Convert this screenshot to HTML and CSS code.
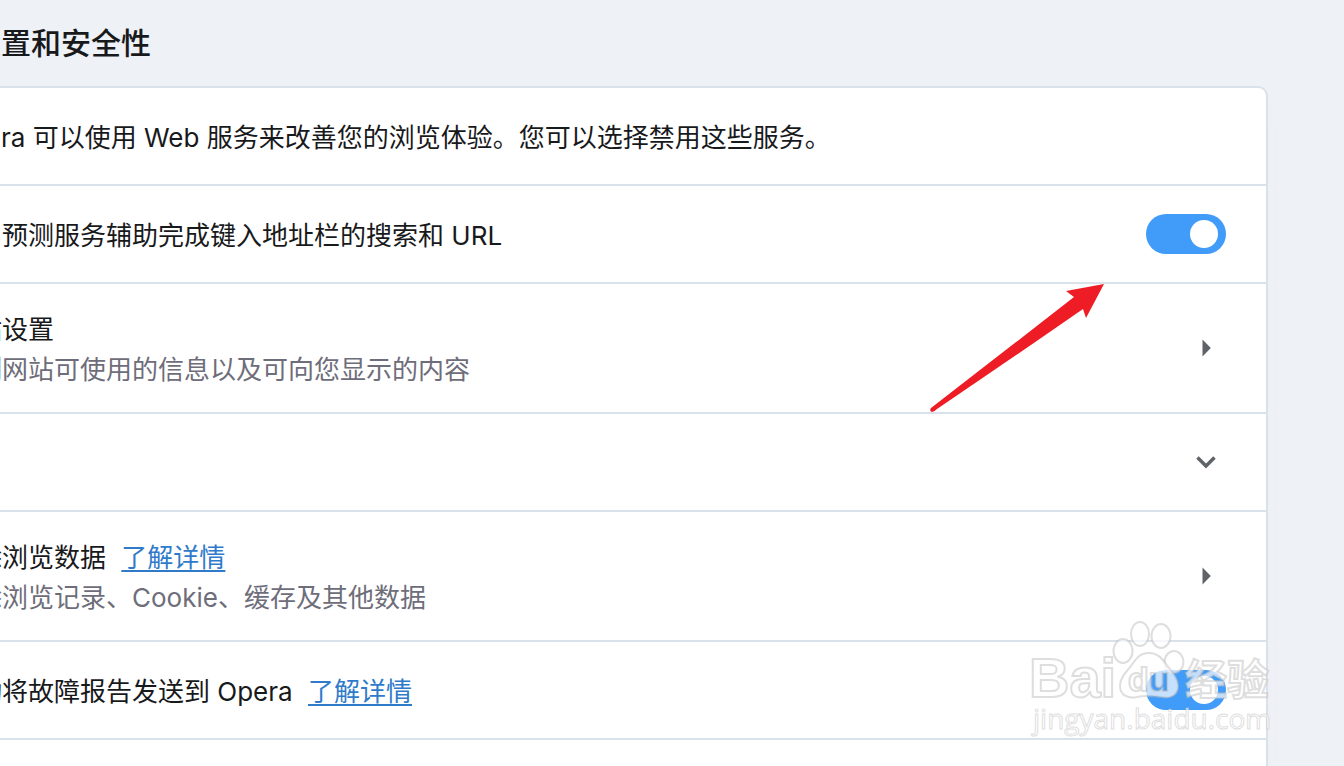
FILE: index.html
```
<!DOCTYPE html>
<html lang="zh-CN">
<head>
    <meta charset="UTF-8">
    <meta name="viewport" content="width=device-width, initial-scale=1.0">
    <title>隐私设置和安全性</title>
    <link rel="stylesheet" href="styles.css">
</head>
<body>
    <main class="section">
        <h1>隐私设置和安全性</h1>
        <div class="card">
            <div class="row">
                <p class="text">Opera 可以使用 Web 服务来改善您的浏览体验。您可以选择禁用这些服务。</p>
            </div>
            <div class="row">
                <label class="text" for="predict">使用预测服务辅助完成键入地址栏的搜索和 URL</label>
                <input class="toggle" type="checkbox" id="predict" checked>
            </div>
            <div class="row">
                <div class="text">
                    <p>网站设置</p>
                    <p class="sub">控制网站可使用的信息以及可向您显示的内容</p>
                </div>
                <button class="icon-button" aria-label="网站设置">
                    <svg width="40" height="40" viewBox="0 0 40 40"><path d="M16.500 11.500L24.800 20L16.500 28.500Z" fill="#5f6368"/></svg>
                </button>
                <svg class="arrow" width="180" height="132" viewBox="0 0 180 132">
                    <path d="M178 0L140 7L148 13Q80 66 5 124Q3 127 6 128Q8 128 11 125Q85 75 157 25L160 34Z" fill="#ee1c25"/>
                </svg>
            </div>
            <div class="row">
                <button class="icon-button" aria-label="更多">
                    <svg width="40" height="40" viewBox="0 0 40 40"><path d="M11.500 15.500L20 24L28.500 15.500" fill="none" stroke="#5f6368" stroke-width="3.500"/></svg>
                </button>
            </div>
            <div class="row">
                <div class="text">
                    <p>清除浏览数据 <a href="#">了解详情</a></p>
                    <p class="sub">清除浏览记录、Cookie、缓存及其他数据</p>
                </div>
                <button class="icon-button" aria-label="清除浏览数据">
                    <svg width="40" height="40" viewBox="0 0 40 40"><path d="M16.500 11.500L24.800 20L16.500 28.500Z" fill="#5f6368"/></svg>
                </button>
            </div>
            <div class="row">
                <p class="text"><label for="report">自动将故障报告发送到 Opera</label> <a href="#">了解详情</a></p>
                <input class="toggle" type="checkbox" id="report" checked>
                <svg class="watermark" width="250" height="130" viewBox="0 0 250 130">
                    <defs>
                        <mask id="cut">
                            <rect width="250" height="130" fill="#fff"/>
                            <text class="du" x="102" y="75" fill="#000">du</text>
                        </mask>
                    </defs>
                    <g class="mark">
                        <text class="bai" x="3" y="81">Bai</text>
                        <ellipse cx="97" cy="35" rx="9.500" ry="12"/>
                        <ellipse cx="114" cy="18" rx="9" ry="12"/>
                        <ellipse cx="135" cy="20" rx="9.500" ry="12"/>
                        <ellipse cx="148" cy="46" rx="9.500" ry="11"/>
                        <path mask="url(#cut)" d="M123 37C112 37 109 45 105 50C100 56 94 62 94 70C94 79 102 83 111 81C119 79 128 80 136 81C146 83 152 78 152 70C152 63 147 57 143 52C138 46 134 37 123 37Z"/>
                        <text class="jingyan" x="159" y="79">经验</text>
                        <text class="site" x="7" y="113">jingyan.baidu.com</text>
                    </g>
                    <text class="du du-line" x="102" y="75">du</text>
                </svg>
            </div>
            <div class="row"></div>
        </div>
    </main>
</body>
</html>
```
FILE: styles.css
```
* {
    box-sizing: border-box;
}
html {
    overflow: hidden;
}
body {
    margin: 0;
    height: 100vh;
    overflow: hidden;
    background-color: #eef1f6;
    color: #18191b;
    font-family: Inter, "Noto Sans CJK SC", sans-serif;
    font-size: 26px;
    line-height: 40px;
}
/* the panel is scrolled to its right side */
.section {
    margin: 0 76px 0 -92px;
}
h1 {
    margin: 0;
    padding: 23px 0 23px 3px;
    font-size: 30px;
    font-weight: 500;
    line-height: 40px;
}
p {
    margin: 0;
}
.card {
    background-color: #fff;
    border: 2px solid #d9e2ea;
    border-radius: 10px;
    box-shadow: 0 24px 18px #edf0f5;
}
.row {
    position: relative;
    display: flex;
    align-items: center;
    min-height: 98px;
    padding: 22px 40px;
    border-bottom: 2px solid #d9e2ea;
}
.row:last-child {
    border-bottom: none;
}
.text {
    padding-top: 4px;
}
.sub {
    color: #6e6d7a;
}
a {
    margin-left: 8px;
    color: #2f7bca;
    text-decoration-thickness: 2px;
    text-underline-offset: 3px;
}
.toggle {
    appearance: none;
    display: flex;
    align-items: center;
    justify-content: flex-end;
    width: 80px;
    height: 40px;
    margin: 0 0 0 auto;
    padding-right: 8px;
    border-radius: 20px;
    background-color: #419bf9;
    cursor: pointer;
}
.toggle::before {
    content: "";
    width: 28px;
    height: 28px;
    border-radius: 50%;
    background-color: #fff;
}
.toggle:not(:checked) {
    justify-content: flex-start;
    padding-left: 8px;
    background-color: #b5bcc4;
}
.icon-button {
    width: 40px;
    height: 40px;
    margin-left: auto;
    padding: 0;
    border: none;
    background: none;
    cursor: pointer;
}
.icon-button svg {
    display: block;
}
.arrow {
    position: absolute;
    top: 0;
    right: 160px;
}
.watermark {
    position: absolute;
    top: -26px;
    right: -10px;
    pointer-events: none;
}
.mark {
    fill: rgba(255, 255, 255, 0.7);
    stroke: rgba(190, 190, 190, 0.5);
    stroke-width: 2px;
}
.bai,
.du {
    font-family: "Liberation Sans", sans-serif;
    font-weight: 700;
}
.bai {
    font-size: 56px;
}
.du {
    font-size: 34px;
}
.du-line {
    fill: none;
    stroke: rgba(190, 190, 190, 0.5);
    stroke-width: 2px;
}
.jingyan {
    font-family: "Noto Sans CJK SC", sans-serif;
    font-size: 42px;
    font-weight: 700;
}
.site {
    font-family: "Open Sans", sans-serif;
    font-size: 28px;
    stroke-width: 1px;
}
```
